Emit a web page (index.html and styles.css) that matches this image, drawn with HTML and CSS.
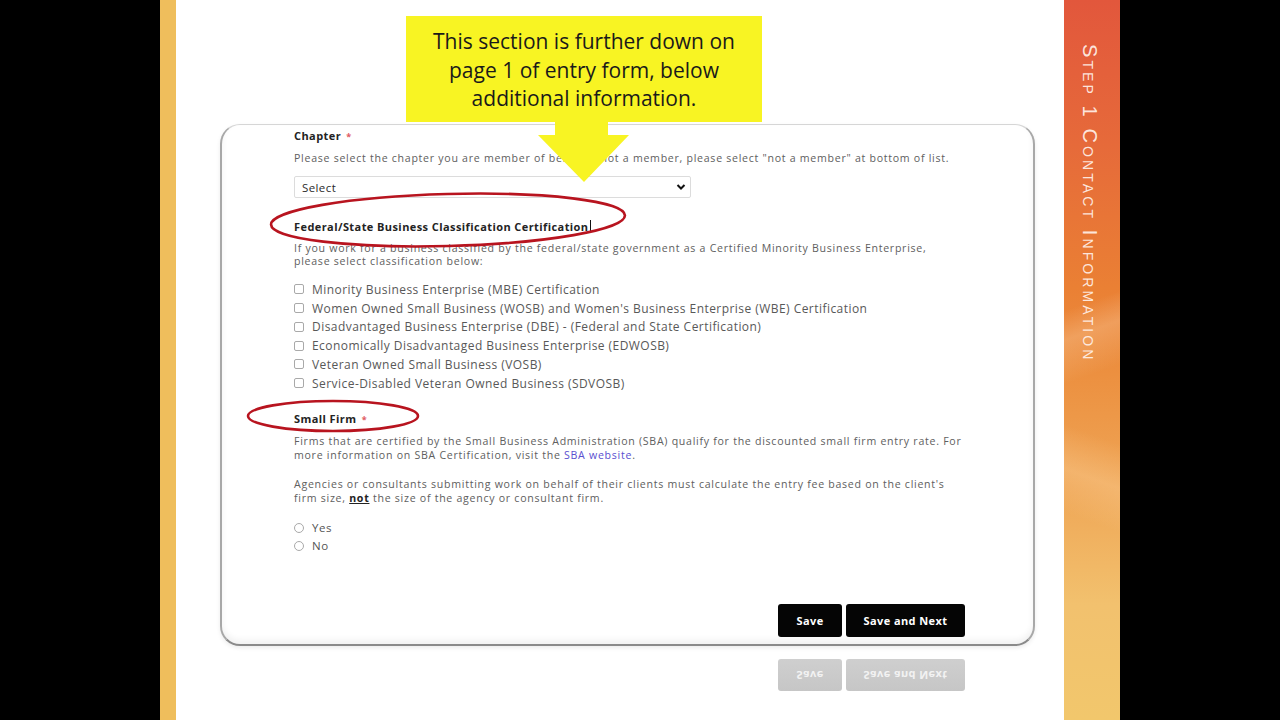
FILE: index.html
```html
<!DOCTYPE html>
<html lang="en">
<head>
<meta charset="utf-8">
<title>Step 1 Contact Information</title>
<link rel="stylesheet" href="styles.css">
</head>
<body>
<div class="slide">
  <div class="stripe"></div>
  <div class="main">
    <div class="card">
      <div class="label">Chapter <span class="req">*</span></div>
      <p class="desc one">Please select the chapter you are member of below. If not a member, please select "not a member" at bottom of list.</p>
      <div class="select">
        <span>Select</span>
        <svg class="chev" width="10" height="8" viewBox="0 0 10 8"><path d="M1.5 2 L5 5.5 L8.5 2" fill="none" stroke="#111" stroke-width="2"/></svg>
      </div>
      <div class="label fed">Federal/State Business Classification Certification<span class="caret"></span></div>
      <p class="desc two">If you work for a business classified by the federal/state government as a Certified Minority Business Enterprise,<br>please select classification below:</p>
      <ul class="checks">
        <li><span class="box"></span>Minority Business Enterprise (MBE) Certification</li>
        <li><span class="box"></span>Women Owned Small Business (WOSB) and Women's Business Enterprise (WBE) Certification</li>
        <li><span class="box"></span>Disadvantaged Business Enterprise (DBE) - (Federal and State Certification)</li>
        <li><span class="box"></span>Economically Disadvantaged Business Enterprise (EDWOSB)</li>
        <li><span class="box"></span>Veteran Owned Small Business (VOSB)</li>
        <li><span class="box"></span>Service-Disabled Veteran Owned Business (SDVOSB)</li>
      </ul>
      <div class="label small">Small Firm <span class="req">*</span></div>
      <p class="para p1">Firms that are certified by the Small Business Administration (SBA) qualify for the discounted small firm entry rate. For<br>more information on SBA Certification, visit the <a class="link">SBA website</a>.</p>
      <p class="para p2">Agencies or consultants submitting work on behalf of their clients must calculate the entry fee based on the client's<br>firm size, <b class="not">not</b> the size of the agency or consultant firm.</p>
      <ul class="radios">
        <li><span class="dot"></span>Yes</li>
        <li><span class="dot"></span>No</li>
      </ul>
      <div class="actions">
        <button class="btn save">Save</button>
        <button class="btn next">Save and Next</button>
      </div>
    </div>
    <div class="reflection">
      <span class="rbtn rsave"><span class="flip">Save</span></span>
      <span class="rbtn rnext"><span class="flip">Save and Next</span></span>
    </div>

    <div class="callout">This section is further down on<br>page 1 of entry form, below<br>additional information.</div>
    <svg class="overlay" width="888" height="720" viewBox="0 0 888 720">
      <polygon points="379,121 432,121 432,135 453,135 408,182 362,135 379,135" fill="#F8F423"/>
      <ellipse cx="272" cy="220" rx="177" ry="26" transform="rotate(-1.5 272 220)" fill="none" stroke="#B8141F" stroke-width="2.6"/>
      <ellipse cx="157" cy="416" rx="85" ry="15" fill="none" stroke="#B8141F" stroke-width="2.6"/>
    </svg>
  </div>
  <div class="side">
    <div class="side-title">Step 1 Contact Information</div>
  </div>
</div>
</body>
</html>
```

FILE: styles.css
```css
html, body {
  margin: 0;
  padding: 0;
  background: #000;
}
.slide {
  margin-left: 160px;
  width: 960px;
  height: 720px;
  display: flex;
  background: #fff;
  overflow: hidden;
}
.stripe {
  width: 16px;
  background: #EFBE5C;
}
.main {
  flex: 1;
  position: relative;
  font-family: "Open Sans", "Liberation Sans", sans-serif;
}
.side {
  width: 56px;
  background:
    linear-gradient(160deg, rgba(255,255,255,0) 0%, rgba(255,255,255,0) 42%, rgba(255,230,200,0.25) 46%, rgba(255,255,255,0) 52%),
    linear-gradient(200deg, rgba(255,255,255,0) 60%, rgba(255,220,170,0.3) 66%, rgba(255,255,255,0) 72%),
    linear-gradient(180deg, #E2573C 0%, #E66A3A 20%, #EA8034 40%, #EC9040 52%, #EFA656 68%, #F2C16E 84%, #F2C76C 100%);
  display: flex;
  justify-content: center;
}
.side-title {
  writing-mode: vertical-rl;
  font-family: "Liberation Sans", sans-serif;
  font-variant: small-caps;
  font-size: 20px;
  letter-spacing: 3.1px;
  color: rgba(255, 242, 236, 0.92);
  padding-top: 44px;
  line-height: 1;
  margin-right: 4px;
}

.card {
  margin: 124px 0 0 44px;
  width: 815px;
  height: 522px;
  box-sizing: border-box;
  border: 1px solid #d6d6d6;
  border-bottom: 2px solid #8a8a8a;
  border-right: 2px solid #a8a8a8;
  border-left: 2px solid #a8a8a8;
  border-radius: 20px;
  background: #fff;
  padding: 4px 68px 0 72px;
  box-shadow: inset 0 -4px 6px rgba(0,0,0,0.06), 0 2px 4px rgba(0,0,0,0.08);
  display: flex;
  flex-direction: column;
}
.label {
  font-size: 11px;
  line-height: 14px;
  font-weight: 700;
  color: #232323;
  letter-spacing: 0.42px;
}
.req {
  color: #e05a63;
  margin-left: 2px;
  font-size: 9px;
}
.desc, .para {
  margin: 0;
  font-size: 10.6px;
  line-height: 14px;
  color: #606060;
  letter-spacing: 0.72px;
}
.desc.one { margin-top: 7px; }
.desc.two { margin-top: 8px; line-height: 13px; }
.select {
  margin-top: 11px;
  width: 397px;
  height: 22px;
  box-sizing: border-box;
  border: 1px solid #dcdcdc;
  border-radius: 2px;
  display: flex;
  align-items: center;
  justify-content: space-between;
  padding: 0 4px 0 7px;
  font-size: 11.5px;
  letter-spacing: 0.4px;
  color: #2a2a2a;
}
.chev { display: block; }
.label.fed { margin-top: 22px; }
.caret {
  display: inline-block;
  width: 1px;
  height: 13px;
  background: #111;
  vertical-align: -2px;
  margin-left: 1px;
}
.checks, .radios {
  list-style: none;
  margin: 0;
  padding: 0;
}
.checks { margin-top: 12px; }
.checks li {
  height: 18.75px;
  display: flex;
  align-items: center;
  font-size: 12px;
  letter-spacing: 0.45px;
  color: #585858;
}
.box {
  width: 8px;
  height: 8px;
  border: 1px solid #a9a9a9;
  border-radius: 2px;
  margin-right: 8px;
  flex: none;
}
.label.small { margin-top: 19px; }
.para.p1 { margin-top: 7px; }
.para.p2 { margin-top: 15px; }
.link { color: #5a4fd0; }
.not {
  color: #222;
  text-decoration: underline;
}
.radios { margin-top: 14px; }
.radios li {
  height: 18px;
  display: flex;
  align-items: center;
  font-size: 11.5px;
  letter-spacing: 0.5px;
  color: #555;
}
.dot {
  width: 8px;
  height: 8px;
  border: 1px solid #a9a9a9;
  border-radius: 50%;
  margin-right: 8px;
  flex: none;
}
.actions {
  margin-top: 49px;
  display: flex;
  justify-content: flex-end;
  gap: 4px;
}
.btn {
  height: 33px;
  border: 0;
  border-radius: 3px;
  background: #050505;
  color: #fff;
  font-family: "Open Sans", "Liberation Sans", sans-serif;
  font-weight: 700;
  font-size: 11px;
  letter-spacing: 0.4px;
  padding: 0;
}
.save { width: 64px; }
.next { width: 119px; }

.reflection {
  margin: 13px 0 0 0;
  width: 789px;
  display: flex;
  justify-content: flex-end;
  gap: 4px;
}
.rbtn {
  height: 32px;
  border-radius: 3px;
  background: linear-gradient(180deg, #cfcfcf 0%, #c6c6c6 100%);
  color: #f2f2f2;
  font-weight: 700;
  font-size: 11px;
  letter-spacing: 0.4px;
  display: flex;
  align-items: center;
  justify-content: center;
}
.rsave { width: 64px; }
.rnext { width: 119px; }
.flip { transform: scaleY(-1); display: block; }

.callout {
  position: absolute;
  left: 230px;
  top: 16px;
  width: 356px;
  height: 106px;
  box-sizing: border-box;
  padding-top: 11px;
  background: #F8F423;
  color: #1a1a1a;
  font-family: "Open Sans", sans-serif;
  font-size: 21px;
  line-height: 28.5px;
  text-align: center;
  z-index: 2;
}
.overlay {
  position: absolute;
  left: 0;
  top: 0;
  z-index: 3;
  pointer-events: none;
}
```
